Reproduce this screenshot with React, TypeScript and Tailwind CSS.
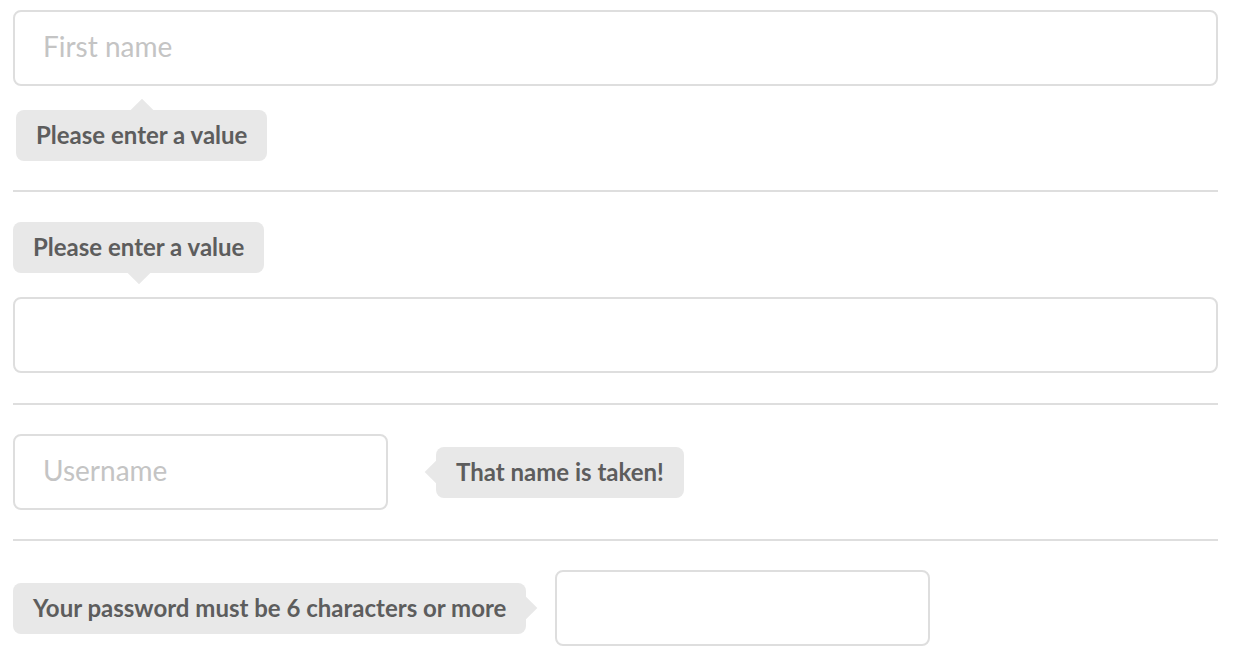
const font = { fontFamily: 'Lato, "Open Sans", sans-serif' };

type Side = 'top' | 'bottom' | 'left' | 'right';

function Prompt({ text, pointer, className = '' }: { text: string; pointer: Side; className?: string }) {
  return (
    <div
      className={`relative inline-flex shrink-0 rounded-[8px] bg-[#e8e8e8] px-[20px] pt-[13px] pb-[15px] text-[24px] leading-[23px] font-bold text-[#5d5d5d] ${className}`}
    >
      {pointer === 'top' && (
        <span className="absolute left-1/2 top-0 h-[16px] w-[16px] -translate-x-1/2 -translate-y-1/2 rotate-45 bg-[#e8e8e8]" />
      )}
      {pointer === 'bottom' && (
        <span className="absolute left-1/2 bottom-0 h-[16px] w-[16px] -translate-x-1/2 translate-y-1/2 rotate-45 bg-[#e8e8e8]" />
      )}
      {pointer === 'left' && (
        <span className="absolute left-0 top-1/2 h-[16px] w-[16px] -translate-x-1/2 -translate-y-1/2 rotate-45 bg-[#e8e8e8]" />
      )}
      {pointer === 'right' && (
        <span className="absolute right-0 top-1/2 h-[16px] w-[16px] translate-x-1/2 -translate-y-1/2 rotate-45 bg-[#e8e8e8]" />
      )}
      <span className="relative">{text}</span>
    </div>
  );
}

function Field({ placeholder, className = '' }: { placeholder?: string; className?: string }) {
  return (
    <input
      placeholder={placeholder}
      style={font}
      className={`block h-[76px] rounded-[8px] border-2 border-[#dedede] bg-white px-[28px] pb-[4px] text-[28px] text-[#333] outline-none placeholder:text-[#c4c4c4] ${className}`}
    />
  );
}

function Divider({ className = '' }: { className?: string }) {
  return <div className={`h-[2px] w-full bg-[#dedede] ${className}`} />;
}

export default function App() {
  return (
    <div style={font} className="min-h-[668px] bg-white pl-[13px] pt-[10px]">
      <div className="w-[1205px]">
        <Field placeholder="First name" className="w-full" />
        <Prompt text="Please enter a value" pointer="top" className="ml-[3px] mt-[24px]" />

        <Divider className="mt-[29px] mb-[30px]" />

        <Prompt text="Please enter a value" pointer="bottom" />
        <Field className="mt-[24px] w-full" />

        <Divider className="mt-[30px] mb-[29px]" />

        <div className="flex items-center gap-[48px]">
          <Field placeholder="Username" className="w-[375px]" />
          <Prompt text="That name is taken!" pointer="left" />
        </div>

        <Divider className="mt-[29px] mb-[29px]" />

        <div className="flex items-center gap-[29px]">
          <Prompt text="Your password must be 6 characters or more" pointer="right" />
          <Field className="w-[375px]" />
        </div>
      </div>
    </div>
  );
}
